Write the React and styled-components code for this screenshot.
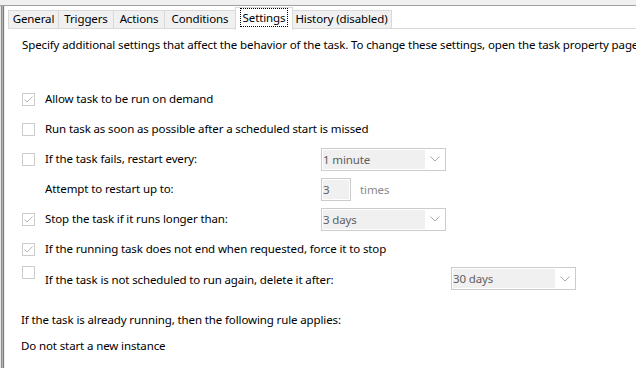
import React from "react";
import styled, { createGlobalStyle } from "styled-components";

const Global = createGlobalStyle`
  html, body { margin: 0; padding: 0; background: #fff; }
  body {
    font-family: "Noto Sans", "Segoe UI", sans-serif;
    font-size: 11.5px;
    letter-spacing: -0.12px;
    color: #000;
  }
`;

const Page = styled.div`
  width: 636px;
  height: 368px;
  overflow: hidden;
  display: flex;
  flex-direction: column;
  background: #fff;
`;

const TopStrip = styled.div`
  height: 5px;
  background: #f0f0f0;
  border-bottom: 1px solid #a0a0a0;
  flex: none;
`;

const Main = styled.div`
  flex: 1;
  display: flex;
  min-height: 0;
`;

const Edge = styled.div`
  width: 5px;
  flex: none;
  background: linear-gradient(
    to right,
    #e6e6e6 0 1px,
    #8c8c8c 1px 2px,
    #b4b4b4 2px 3px,
    #7a7a7a 3px 4px,
    #f0f0f0 4px 5px
  );
`;

const Body = styled.div`
  flex: 1;
  display: flex;
  flex-direction: column;
  padding-left: 3px;
  min-width: 0;
`;

const TabStrip = styled.div`
  display: flex;
  align-items: flex-end;
  height: 22px;
  margin-top: 1px;
  position: relative;
  z-index: 1;
`;

const Tab = styled.div`
  box-sizing: border-box;
  width: ${(p) => p.$w}px;
  height: ${(p) => (p.$active ? 23 : 19)}px;
  margin-bottom: ${(p) => (p.$active ? "-1px" : "0")};
  display: flex;
  align-items: center;
  justify-content: center;
  background: ${(p) => (p.$active ? "#fff" : "#f0f0f0")};
  border: 1px solid #d9d9d9;
  border-left: ${(p) => (p.$first || p.$active ? "1px solid #d9d9d9" : "none")};
  border-bottom: ${(p) => (p.$active ? "none" : "1px solid #d9d9d9")};
  margin-left: ${(p) => (p.$active ? "-1px" : "0")};
  margin-right: ${(p) => (p.$active ? "-1px" : "0")};
  position: relative;
  z-index: ${(p) => (p.$active ? 1 : 0)};
  white-space: nowrap;
  line-height: 16px;
  padding-bottom: ${(p) => (p.$active ? "3px" : "1px")};
`;

const Focus = styled.span`
  outline: 1px dotted #000;
  outline-offset: 0;
  padding: 0 2px;
  line-height: 17px;
`;

const Panel = styled.div`
  flex: 1;
  border-top: 1px solid #d9d9d9;
  margin-top: -1px;
  padding: 8px 0 0 14px;
  display: flex;
  flex-direction: column;
`;

const Description = styled.div`
  white-space: nowrap;
  line-height: 16px;
`;

const Options = styled.div`
  margin-top: 31px;
  display: flex;
  flex-direction: column;
`;

const Row = styled.div`
  height: 30px;
  display: flex;
  align-items: ${(p) => (p.$low ? "flex-start" : "center")};
`;

const BoxCell = styled.div`
  width: 23px;
  flex: none;
  display: flex;
`;

const Box = styled.div`
  box-sizing: border-box;
  width: 13px;
  height: 13px;
  border: 1px solid #cccccc;
  background: #fff;
  display: flex;
  align-items: center;
  justify-content: center;
  margin-top: ${(p) => (p.$low ? "2px" : "0")};
`;

const Label = styled.div`
  width: ${(p) => p.$w}px;
  flex: none;
  white-space: nowrap;
  line-height: 16px;
  margin-top: ${(p) => (p.$low ? "8px" : "0")};
`;

const Select = styled.div`
  box-sizing: border-box;
  width: 125px;
  flex: none;
  height: 23px;
  border: 1px solid #cccccc;
  display: flex;
  align-items: center;
  padding: 1px;
  margin-top: ${(p) => (p.$low ? "3px" : "0")};
`;

const SelectValue = styled.div`
  width: 102px;
  flex: none;
  height: 19px;
  background: #f0f0f0;
  color: #5e5e5e;
  line-height: 19px;
  white-space: nowrap;
`;

const Chevron = styled.div`
  flex: 1;
  display: flex;
  justify-content: center;
  align-items: center;
`;

const SpinGroup = styled.div`
  display: flex;
  align-items: center;
  gap: 9px;
`;

const NumBox = styled.div`
  box-sizing: border-box;
  width: 30px;
  height: 23px;
  border: 1px solid #cccccc;
  padding: 1px;
  display: flex;
`;

const NumValue = styled.div`
  flex: 1;
  background: #f0f0f0;
  color: #5e5e5e;
  line-height: 19px;
`;

const Muted = styled.span`
  color: #8a8a8a;
`;

const Footer = styled.div`
  margin-top: 18px;
  display: flex;
  flex-direction: column;
  gap: 10px;
  line-height: 16px;
  margin-left: -1px;
`;

const Check = () => (
  <svg width="11" height="11" viewBox="0 0 11 11">
    <path d="M1.5 5.5 L4 8 L9.5 2.5" fill="none" stroke="#b8b8b8" strokeWidth="1" />
  </svg>
);

const Arrow = () => (
  <svg width="10" height="6" viewBox="0 0 10 6">
    <path d="M0.5 0.5 L5 5 L9.5 0.5" fill="none" stroke="#a8a8a8" strokeWidth="1" />
  </svg>
);

const Dropdown = ({ value, low }) => (
  <Select $low={low}>
    <SelectValue>{value}</SelectValue>
    <Chevron>
      <Arrow />
    </Chevron>
  </Select>
);

const Option = ({ checked, box = true, label, w = 276, low, children }) => (
  <Row $low={low}>
    <BoxCell>{box && <Box $low={low}>{checked && <Check />}</Box>}</BoxCell>
    <Label $w={w} $low={low}>{label}</Label>
    {children}
  </Row>
);

const tabs = [
  { label: "General", w: 51 },
  { label: "Triggers", w: 55 },
  { label: "Actions", w: 51 },
  { label: "Conditions", w: 71 },
  { label: "Settings", w: 58, active: true },
  { label: "History (disabled)", w: 100 },
];

export default function App() {
  return (
    <Page>
      <Global />
      <TopStrip />
      <Main>
        <Edge />
        <Body>
          <TabStrip>
            {tabs.map((t, i) => (
              <Tab key={t.label} $w={t.w} $active={t.active} $first={i === 0}>
                {t.active ? <Focus>{t.label}</Focus> : t.label}
              </Tab>
            ))}
          </TabStrip>
          <Panel>
            <Description>
              Specify additional settings that affect the behavior of the task. To change these settings, open the task property page
            </Description>
            <Options>
              <Option checked label="Allow task to be run on demand" />
              <Option label="Run task as soon as possible after a scheduled start is missed" />
              <Option label="If the task fails, restart every:">
                <Dropdown value="1 minute" />
              </Option>
              <Option box={false} label="Attempt to restart up to:">
                <SpinGroup>
                  <NumBox><NumValue>3</NumValue></NumBox>
                  <Muted>times</Muted>
                </SpinGroup>
              </Option>
              <Option checked label="Stop the task if it runs longer than:">
                <Dropdown value="3 days" />
              </Option>
              <Option checked label="If the running task does not end when requested, force it to stop" />
              <Option low w={406} label="If the task is not scheduled to run again, delete it after:">
                <Dropdown value="30 days" low />
              </Option>
            </Options>
            <Footer>
              <div>If the task is already running, then the following rule applies:</div>
              <div>Do not start a new instance</div>
            </Footer>
          </Panel>
        </Body>
      </Main>
    </Page>
  );
}
